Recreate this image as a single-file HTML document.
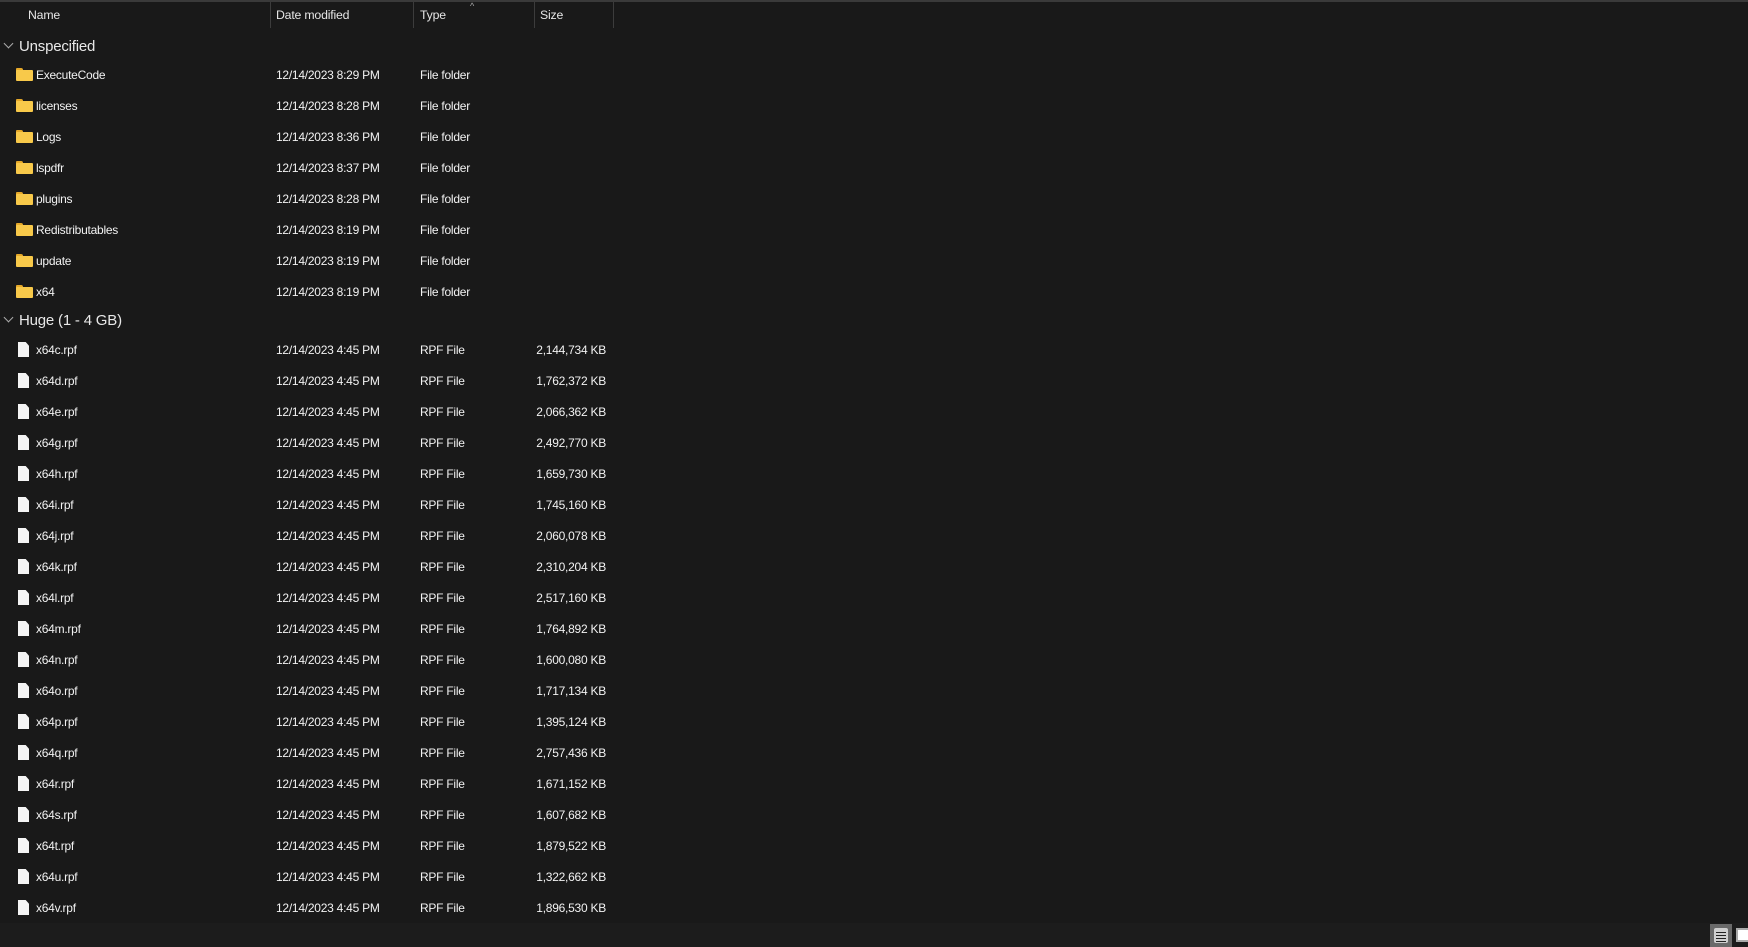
<!DOCTYPE html>
<html><head><meta charset="utf-8"><style>
html,body{margin:0;width:1748px;height:947px;background:#191919;overflow:hidden;font-family:"Liberation Sans",sans-serif;color:#fff}
.top{position:absolute;left:0;top:0;width:1748px;height:2px;background:#3a3a3a}
.h{position:absolute;top:8px;font-size:12.3px;color:#e6e6e6;letter-spacing:-0.2px}
.sep{position:absolute;top:2px;width:1px;height:26px;background:#3c3c3c}
.g{position:absolute;left:19px;font-size:15px;color:#e8e8e8;height:20px;line-height:20px;letter-spacing:-0.2px}
.g i{position:absolute;left:-14px;top:3px;width:6px;height:6px;border-right:1px solid #aaa;border-bottom:1px solid #aaa;transform:rotate(45deg)}
.r{position:absolute;left:0;width:640px;height:20px;line-height:20px;font-size:12px;color:#f2f2f2;letter-spacing:-0.25px}
.r span{position:absolute;top:0}
.n{left:36px}.d{left:276px}.t{left:420px}.s{right:34px;text-align:right}
.fo{position:absolute;left:16px;top:3px;width:17px;height:13px}
.fo:before{content:"";position:absolute;left:0;top:0;width:7px;height:4px;background:#e6a92a;border-radius:1px 2px 0 0}
.fo:after{content:"";position:absolute;left:0;top:2px;width:17px;height:11px;background:#f8c94a;border-radius:1px}
.fi{position:absolute;left:18px;top:2px;width:11px;height:15px;background:#f4f4f4;clip-path:polygon(0 0,70% 0,100% 25%,100% 100%,0 100%)}
.sb{position:absolute;left:0;top:923px;width:1748px;height:24px;background:#1c1c1c}
.b1{position:absolute;left:1710px;top:924px;width:22px;height:23px;background:#6a6a6a}
.b1 i{position:absolute;left:4px;top:4px;width:14px;height:15px;background:#cfcfcf;border-radius:2px}
.b1 b{position:absolute;left:6px;width:10px;height:1px;background:#222}
.b2{position:absolute;left:1736px;top:928px;width:14px;height:14px;background:#fff;border:2px solid #aaa;box-sizing:border-box}
</style></head><body>
<div class="top"></div>
<div class="h" style="left:28px">Name</div>
<div class="sep" style="left:270px"></div>
<div class="h" style="left:276px">Date modified</div>
<div class="sep" style="left:413px"></div>
<div class="h" style="left:420px">Type</div>
<div style="position:absolute;left:470px;top:1px;font-size:9px;color:#aaa">^</div>
<div class="sep" style="left:534px"></div>
<div class="h" style="left:540px">Size</div>
<div class="sep" style="left:613px"></div>

<div class="g" style="top:37px"><i></i>Unspecified</div>
<div class="r" style="top:65px"><div class="fo"></div><span class="n">ExecuteCode</span><span class="d">12/14/2023 8:29 PM</span><span class="t">File folder</span></div>
<div class="r" style="top:96px"><div class="fo"></div><span class="n">licenses</span><span class="d">12/14/2023 8:28 PM</span><span class="t">File folder</span></div>
<div class="r" style="top:127px"><div class="fo"></div><span class="n">Logs</span><span class="d">12/14/2023 8:36 PM</span><span class="t">File folder</span></div>
<div class="r" style="top:158px"><div class="fo"></div><span class="n">lspdfr</span><span class="d">12/14/2023 8:37 PM</span><span class="t">File folder</span></div>
<div class="r" style="top:189px"><div class="fo"></div><span class="n">plugins</span><span class="d">12/14/2023 8:28 PM</span><span class="t">File folder</span></div>
<div class="r" style="top:220px"><div class="fo"></div><span class="n">Redistributables</span><span class="d">12/14/2023 8:19 PM</span><span class="t">File folder</span></div>
<div class="r" style="top:251px"><div class="fo"></div><span class="n">update</span><span class="d">12/14/2023 8:19 PM</span><span class="t">File folder</span></div>
<div class="r" style="top:282px"><div class="fo"></div><span class="n">x64</span><span class="d">12/14/2023 8:19 PM</span><span class="t">File folder</span></div>

<div class="g" style="top:311px"><i></i>Huge (1 - 4 GB)</div>
<div class="r" style="top:340px"><div class="fi"></div><span class="n">x64c.rpf</span><span class="d">12/14/2023 4:45 PM</span><span class="t">RPF File</span><span class="s">2,144,734 KB</span></div>
<div class="r" style="top:371px"><div class="fi"></div><span class="n">x64d.rpf</span><span class="d">12/14/2023 4:45 PM</span><span class="t">RPF File</span><span class="s">1,762,372 KB</span></div>
<div class="r" style="top:402px"><div class="fi"></div><span class="n">x64e.rpf</span><span class="d">12/14/2023 4:45 PM</span><span class="t">RPF File</span><span class="s">2,066,362 KB</span></div>
<div class="r" style="top:433px"><div class="fi"></div><span class="n">x64g.rpf</span><span class="d">12/14/2023 4:45 PM</span><span class="t">RPF File</span><span class="s">2,492,770 KB</span></div>
<div class="r" style="top:464px"><div class="fi"></div><span class="n">x64h.rpf</span><span class="d">12/14/2023 4:45 PM</span><span class="t">RPF File</span><span class="s">1,659,730 KB</span></div>
<div class="r" style="top:495px"><div class="fi"></div><span class="n">x64i.rpf</span><span class="d">12/14/2023 4:45 PM</span><span class="t">RPF File</span><span class="s">1,745,160 KB</span></div>
<div class="r" style="top:526px"><div class="fi"></div><span class="n">x64j.rpf</span><span class="d">12/14/2023 4:45 PM</span><span class="t">RPF File</span><span class="s">2,060,078 KB</span></div>
<div class="r" style="top:557px"><div class="fi"></div><span class="n">x64k.rpf</span><span class="d">12/14/2023 4:45 PM</span><span class="t">RPF File</span><span class="s">2,310,204 KB</span></div>
<div class="r" style="top:588px"><div class="fi"></div><span class="n">x64l.rpf</span><span class="d">12/14/2023 4:45 PM</span><span class="t">RPF File</span><span class="s">2,517,160 KB</span></div>
<div class="r" style="top:619px"><div class="fi"></div><span class="n">x64m.rpf</span><span class="d">12/14/2023 4:45 PM</span><span class="t">RPF File</span><span class="s">1,764,892 KB</span></div>
<div class="r" style="top:650px"><div class="fi"></div><span class="n">x64n.rpf</span><span class="d">12/14/2023 4:45 PM</span><span class="t">RPF File</span><span class="s">1,600,080 KB</span></div>
<div class="r" style="top:681px"><div class="fi"></div><span class="n">x64o.rpf</span><span class="d">12/14/2023 4:45 PM</span><span class="t">RPF File</span><span class="s">1,717,134 KB</span></div>
<div class="r" style="top:712px"><div class="fi"></div><span class="n">x64p.rpf</span><span class="d">12/14/2023 4:45 PM</span><span class="t">RPF File</span><span class="s">1,395,124 KB</span></div>
<div class="r" style="top:743px"><div class="fi"></div><span class="n">x64q.rpf</span><span class="d">12/14/2023 4:45 PM</span><span class="t">RPF File</span><span class="s">2,757,436 KB</span></div>
<div class="r" style="top:774px"><div class="fi"></div><span class="n">x64r.rpf</span><span class="d">12/14/2023 4:45 PM</span><span class="t">RPF File</span><span class="s">1,671,152 KB</span></div>
<div class="r" style="top:805px"><div class="fi"></div><span class="n">x64s.rpf</span><span class="d">12/14/2023 4:45 PM</span><span class="t">RPF File</span><span class="s">1,607,682 KB</span></div>
<div class="r" style="top:836px"><div class="fi"></div><span class="n">x64t.rpf</span><span class="d">12/14/2023 4:45 PM</span><span class="t">RPF File</span><span class="s">1,879,522 KB</span></div>
<div class="r" style="top:867px"><div class="fi"></div><span class="n">x64u.rpf</span><span class="d">12/14/2023 4:45 PM</span><span class="t">RPF File</span><span class="s">1,322,662 KB</span></div>
<div class="r" style="top:898px"><div class="fi"></div><span class="n">x64v.rpf</span><span class="d">12/14/2023 4:45 PM</span><span class="t">RPF File</span><span class="s">1,896,530 KB</span></div>

<div class="sb"></div>
<div class="b1"><i></i><b style="top:8px"></b><b style="top:11px"></b><b style="top:14px"></b><b style="top:17px"></b></div>
<div class="b2"></div>
</body></html>
